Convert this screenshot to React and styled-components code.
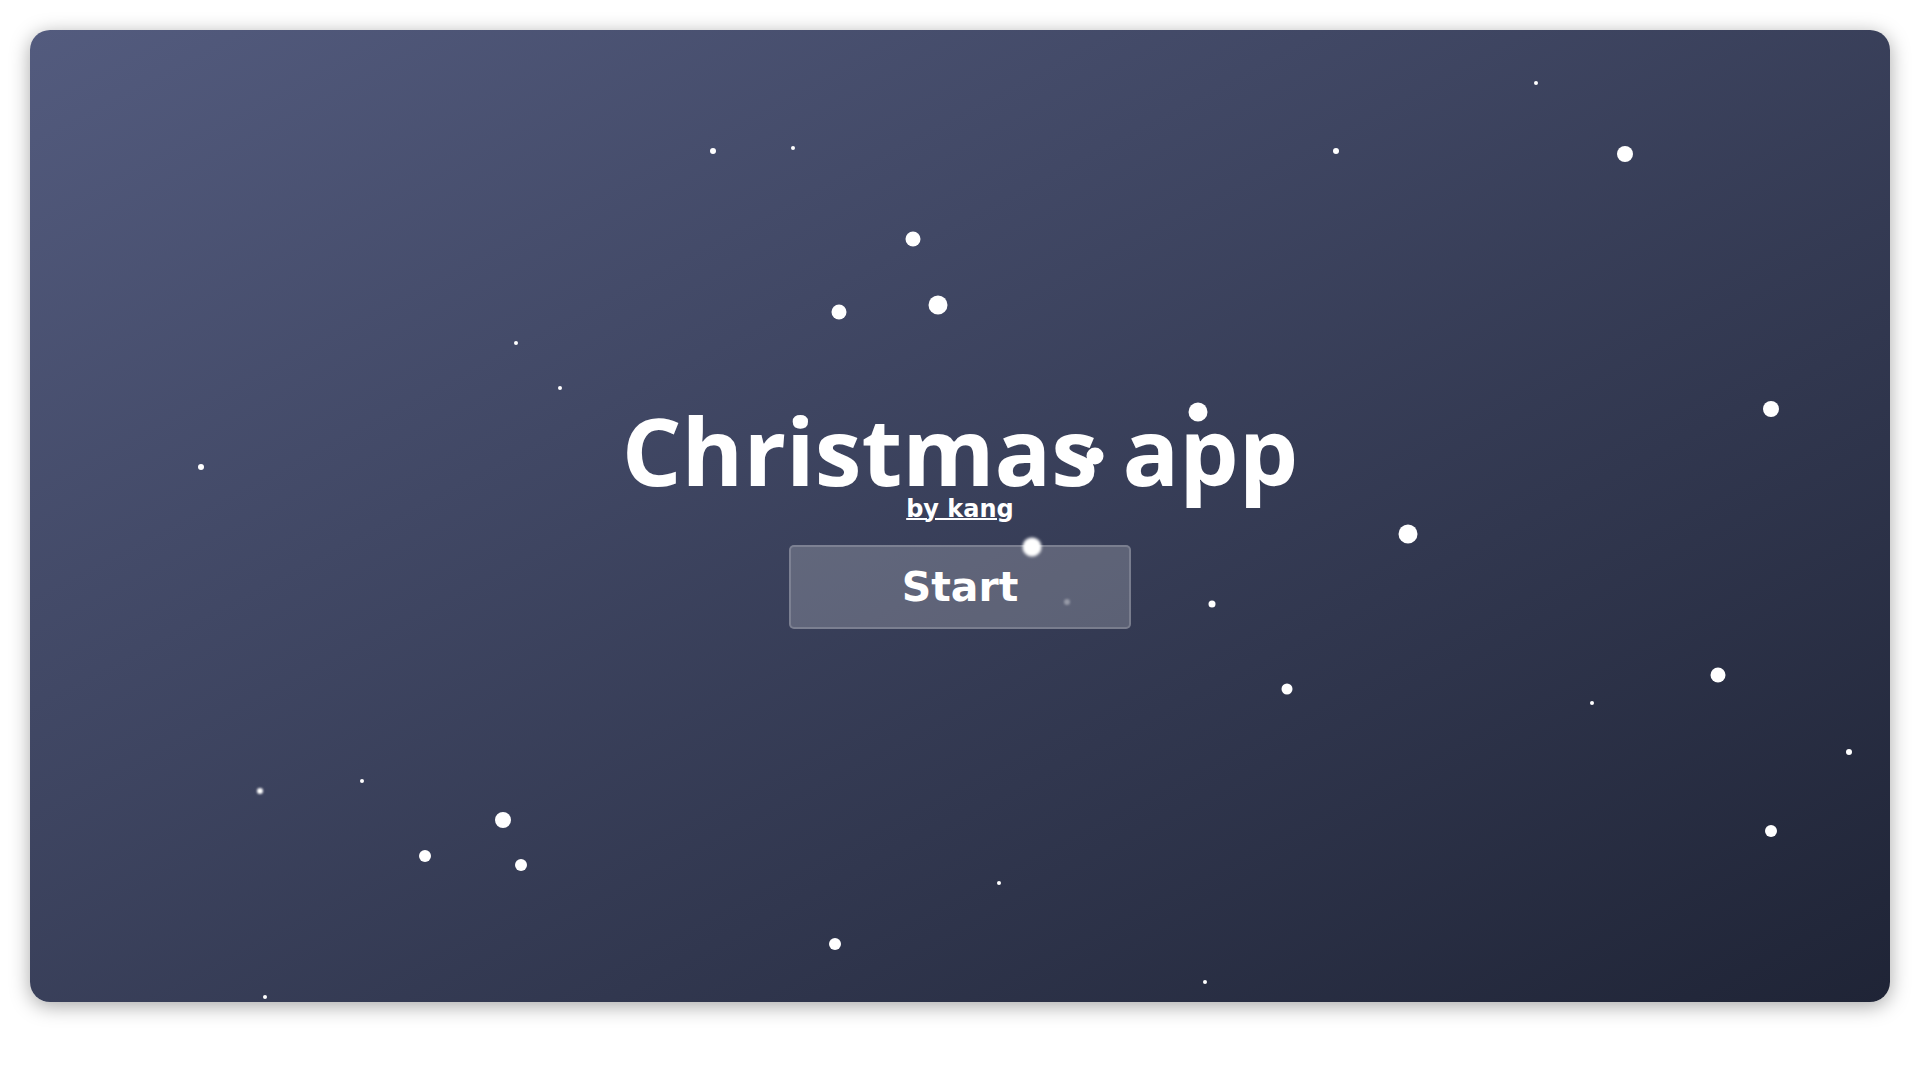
import styled, { createGlobalStyle } from "styled-components";

const GlobalStyle = createGlobalStyle`
  body {
    margin: 0;
    background: #ffffff;
    font-family: "DejaVu Sans", sans-serif;
  }
`;

const Page = styled.div`
  padding: 30px;
`;

const Card = styled.div`
  position: relative;
  height: 90vh;
  border-radius: 20px;
  overflow: hidden;
  background: linear-gradient(to bottom right, #535b7e, #1f2436);
  box-shadow: 0 4px 20px rgba(0, 0, 0, 0.35);
  display: flex;
  flex-direction: column;
  align-items: center;
  justify-content: center;
`;

const Title = styled.h1`
  margin: 0;
  font-family: "Open Sans", "Liberation Sans", sans-serif;
  font-weight: 700;
  font-size: 94px;
  line-height: 93px;
  color: #ffffff;
`;

const Author = styled.a`
  font-family: "DejaVu Sans", sans-serif;
  font-weight: 700;
  font-size: 24px;
  line-height: 1;
  color: #ffffff;
  text-decoration: underline;
  text-decoration-thickness: 2px;
`;

const StartButton = styled.button`
  margin-top: 24px;
  width: 342px;
  height: 84px;
  border: 2px solid rgba(255, 255, 255, 0.18);
  border-radius: 5px;
  background: rgba(255, 255, 255, 0.2);
  color: #ffffff;
  font-family: "DejaVu Sans", sans-serif;
  font-weight: 700;
  font-size: 41px;
  cursor: pointer;
`;

const Snow = styled.div`
  position: absolute;
  inset: 0;
  pointer-events: none;
`;

const Flake = styled.span`
  position: absolute;
  border-radius: 50%;
  background: #ffffff;
  transform: translate(-50%, -50%);
  width: ${(p) => p.$d}px;
  height: ${(p) => p.$d}px;
  opacity: ${(p) => (p.$faint ? 0.35 : 1)};
  filter: ${(p) => (p.$blur ? `blur(${p.$blur}px)` : "none")};
`;

// positions in page coordinates (card starts at 30,30)
const flakes = [
  [713, 151, 6],
  [793, 148, 4],
  [1336, 151, 6],
  [1536, 83, 4],
  [1625, 154, 16],
  [913, 239, 15],
  [839, 312, 15],
  [938, 305, 19],
  [516, 343, 4],
  [560, 388, 4],
  [201, 467, 6],
  [1198, 412, 19],
  [1095, 456, 17],
  [1771, 409, 16],
  [1408, 534, 19],
  [1032, 547, 19, 1.5],
  [1067, 602, 6, 1, true],
  [1212, 604, 7],
  [1287, 689, 11],
  [1592, 703, 4],
  [1718, 675, 15],
  [1849, 752, 6],
  [260, 791, 6, 1],
  [362, 781, 4],
  [503, 820, 16],
  [425, 856, 12],
  [521, 865, 12],
  [999, 883, 4],
  [835, 944, 12],
  [1771, 831, 12],
  [1205, 982, 4],
  [265, 997, 4],
];

export default function App() {
  return (
    <Page>
      <GlobalStyle />
      <Card>
        <Title>Christmas app</Title>
        <Author href="#">by kang</Author>
        <StartButton>Start</StartButton>
        <Snow>
          {flakes.map(([x, y, d, blur, faint], i) => (
            <Flake
              key={i}
              $d={d}
              $blur={blur}
              $faint={faint}
              style={{ left: x - 30, top: y - 30 }}
            />
          ))}
        </Snow>
      </Card>
    </Page>
  );
}
